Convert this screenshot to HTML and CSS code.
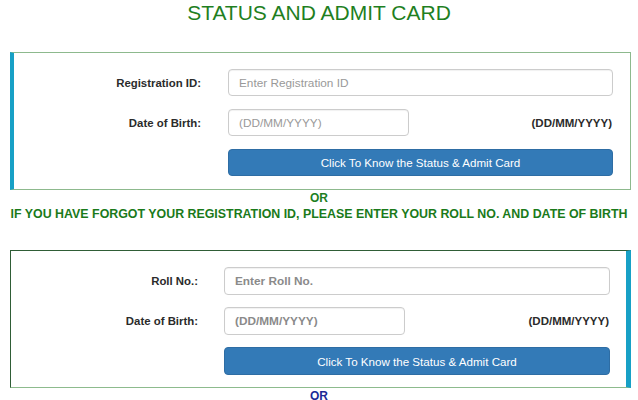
FILE: index.html
```html
<!DOCTYPE html>
<html>
<head>
<meta charset="utf-8">
<link rel="stylesheet" href="styles.css">
</head>
<body>
<h1 class="title">STATUS AND ADMIT CARD</h1>

<div class="card card-one">
  <div class="row">
    <label class="lbl">Registration ID:</label>
    <div class="field"><input class="inp" type="text" placeholder="Enter Registration ID"></div>
  </div>
  <div class="row">
    <label class="lbl">Date of Birth:</label>
    <div class="field split"><input class="inp inp-date" type="text" placeholder="(DD/MM/YYYY)"><span class="hint">(DD/MM/YYYY)</span></div>
  </div>
  <div class="row">
    <span class="lbl"></span>
    <div class="field"><button class="btn">Click To Know the Status &amp; Admit Card</button></div>
  </div>
</div>

<div class="or or-green">OR</div>
<div class="forgot">IF YOU HAVE FORGOT YOUR REGISTRATION ID, PLEASE ENTER YOUR ROLL NO. AND DATE OF BIRTH</div>

<div class="card card-two">
  <div class="row">
    <label class="lbl">Roll No.:</label>
    <div class="field"><input class="inp inp-bold" type="text" placeholder="Enter Roll No."></div>
  </div>
  <div class="row">
    <label class="lbl">Date of Birth:</label>
    <div class="field split"><input class="inp inp-date inp-bold" type="text" placeholder="(DD/MM/YYYY)"><span class="hint">(DD/MM/YYYY)</span></div>
  </div>
  <div class="row">
    <span class="lbl"></span>
    <div class="field"><button class="btn">Click To Know the Status &amp; Admit Card</button></div>
  </div>
</div>

<div class="or or-blue">OR</div>
</body>
</html>
```

FILE: styles.css
```css
html, body {
  margin: 0;
  padding: 0;
  background: #ffffff;
  font-family: "Liberation Sans", Arial, sans-serif;
  color: #333333;
}

.title {
  margin: 0;
  padding-top: 1px;
  height: 52px;
  font-size: 21px;
  font-weight: normal;
  text-align: center;
  color: #1f7f1f;
  line-height: 24px;
  box-sizing: border-box;
}

.card {
  margin-left: 10px;
  width: 621px;
  box-sizing: border-box;
  display: flex;
  flex-direction: column;
}

.card-one {
  border: 1px solid #8db98d;
  border-left: 4px solid #17a0c6;
  padding: 16px 17px 12px 0;
  height: 138px;
  gap: 13px;
}

.card-two {
  border: 1px solid #2f5d36;
  border-bottom-color: #8dbb8d;
  border-right: 5px solid #17a0c6;
  padding: 16px 16px 12px 0;
  height: 138px;
  gap: 12px;
}

.row {
  display: flex;
  align-items: center;
  height: 27px;
}

.card-two .row { height: 28px; }

.lbl {
  flex: 0 0 auto;
  text-align: right;
  font-size: 11.4px;
  font-weight: bold;
  color: #2b2b2b;
}

.card-one .lbl { width: 187px; margin-right: 27px; }
.card-two .lbl { width: 187px; margin-right: 26px; }

.field {
  flex: 1 1 auto;
  display: flex;
  align-items: center;
  height: 100%;
}

.split { justify-content: space-between; }

.inp {
  width: 100%;
  height: 100%;
  box-sizing: border-box;
  border: 1px solid #cccccc;
  border-radius: 4px;
  padding: 0 10px;
  font-family: "Liberation Sans", Arial, sans-serif;
  font-size: 11.8px;
  color: #555555;
  background: #ffffff;
  box-shadow: inset 0 1px 1px rgba(0,0,0,0.06);
}

.inp::placeholder { color: #999999; }
.inp-bold::placeholder { color: #8a8a8a; font-weight: bold; }

.inp-date { width: 181px; flex: 0 0 auto; }

.hint {
  font-size: 11.5px;
  font-weight: bold;
  color: #2b2b2b;
  padding-right: 1px;
}

.btn {
  width: 100%;
  height: 100%;
  border: 1px solid #2e6da4;
  border-radius: 4px;
  background: #337ab7;
  color: #ffffff;
  font-family: "Liberation Sans", Arial, sans-serif;
  font-size: 11.6px;
  padding: 0;
}

.or {
  text-align: center;
  font-size: 12px;
  font-weight: bold;
  line-height: 16px;
}

.or-green { color: #1f7f1f; }
.or-blue { color: #1c2a96; margin-top: 0; }

.forgot {
  text-align: center;
  font-size: 12.4px;
  font-weight: bold;
  color: #1a7a1a;
  line-height: 16px;
  margin-bottom: 28px;
  white-space: nowrap;
}
```
